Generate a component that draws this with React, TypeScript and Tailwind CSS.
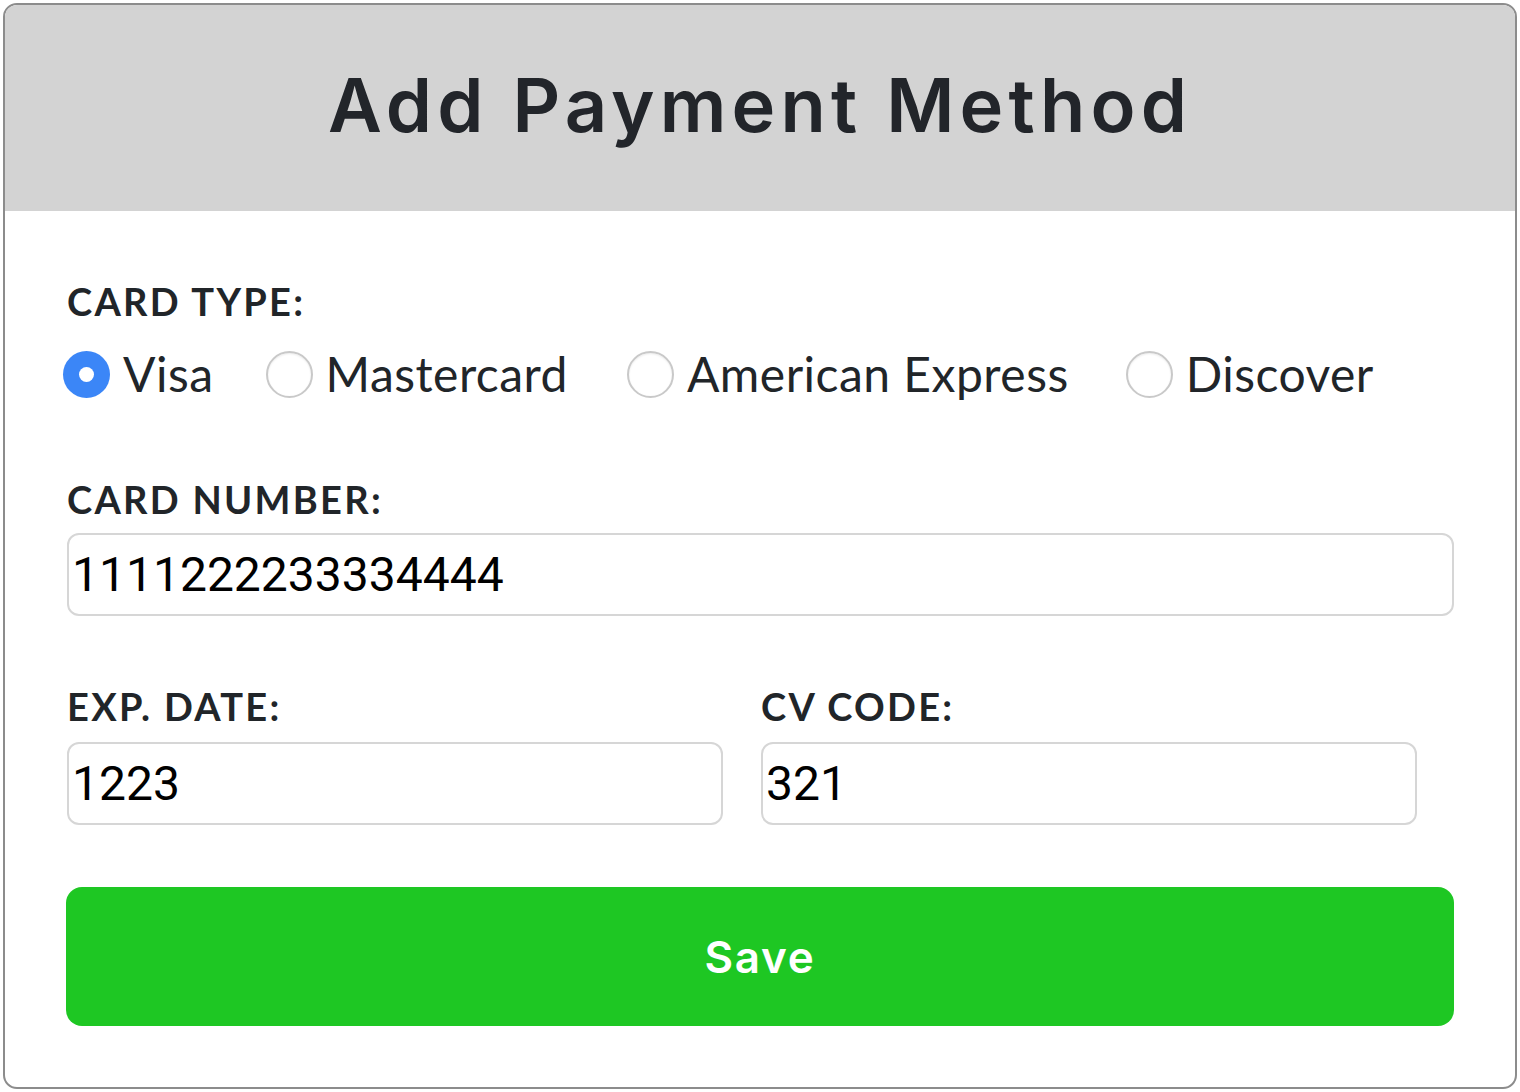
import React, { useState } from "react";

const cardTypes = [
  { name: "Visa", gap: "mr-[52px]" },
  { name: "Mastercard", gap: "mr-[59px]" },
  { name: "American Express", gap: "mr-[57px]" },
  { name: "Discover", gap: "" },
];

function Radio({ checked }: { checked: boolean }) {
  if (checked) {
    return (
      <span className="flex h-[47px] w-[47px] shrink-0 items-center justify-center rounded-full bg-[#3b86f7]">
        <span className="h-[15px] w-[15px] rounded-full bg-white" />
      </span>
    );
  }
  return (
    <span className="h-[47px] w-[47px] shrink-0 rounded-full border-2 border-[#c9c9c9] bg-white shadow-[inset_0_1px_2px_rgba(0,0,0,0.08)]" />
  );
}

export default function App() {
  const [cardType, setCardType] = useState("Visa");
  const [number, setNumber] = useState("1111222233334444");
  const [exp, setExp] = useState("1223");
  const [cvc, setCvc] = useState("321");

  const label = "block text-[38px] font-bold leading-none text-[#212529] tracking-[0.06em]";
  const input =
    "block h-[83px] rounded-[12px] border-2 border-[#d6d6d6] bg-white px-[3px] text-[48px] text-black outline-none font-['Roboto',sans-serif]";

  return (
    <div className="bg-white p-[3px] font-['Lato','Noto_Sans',sans-serif]">
      <div className="flex h-[1086px] w-[1514px] flex-col overflow-hidden rounded-[14px] border-2 border-[#8c8c8c] bg-white">
        {/* Header */}
        <div className="flex h-[206px] shrink-0 items-center justify-center bg-[#d3d3d3]">
          <h1 className="pb-[6px] font-['Inter',sans-serif] text-[74px] font-semibold leading-none tracking-[0.07em] text-[#22252a]">
            Add Payment Method
          </h1>
        </div>

        {/* Form */}
        <div className="flex flex-col px-[62px] pt-[71px]">
          <span className={label}>CARD TYPE:</span>
          <div className="-ml-[4px] mt-[30px] flex items-center">
            {cardTypes.map((t) => (
              <label
                key={t.name}
                onClick={() => setCardType(t.name)}
                className={"flex cursor-pointer items-center gap-[13px] " + t.gap}
              >
                <Radio checked={cardType === t.name} />
                <span className="text-[48px] leading-none tracking-[0.01em] text-[#212529]">{t.name}</span>
              </label>
            ))}
          </div>

          <span className={label + " mt-[82px]"}>CARD NUMBER:</span>
          <input
            className={input + " mt-[15px] w-[1387px]"}
            value={number}
            onChange={(e) => setNumber(e.target.value)}
          />

          <div className="mt-[71px] flex gap-[38px]">
            <div className="flex flex-col">
              <span className={label}>EXP. DATE:</span>
              <input
                className={input + " mt-[17px] w-[656px]"}
                value={exp}
                onChange={(e) => setExp(e.target.value)}
              />
            </div>
            <div className="flex flex-col">
              <span className={label}>CV CODE:</span>
              <input
                className={input + " mt-[17px] w-[656px]"}
                value={cvc}
                onChange={(e) => setCvc(e.target.value)}
              />
            </div>
          </div>

          <button className="-ml-[1px] mt-[62px] h-[139px] w-[1388px] rounded-[16px] bg-[#1ec723] font-['Inter',sans-serif] text-[44px] font-semibold tracking-[0.04em] text-white">
            Save
          </button>
        </div>
      </div>
    </div>
  );
}
